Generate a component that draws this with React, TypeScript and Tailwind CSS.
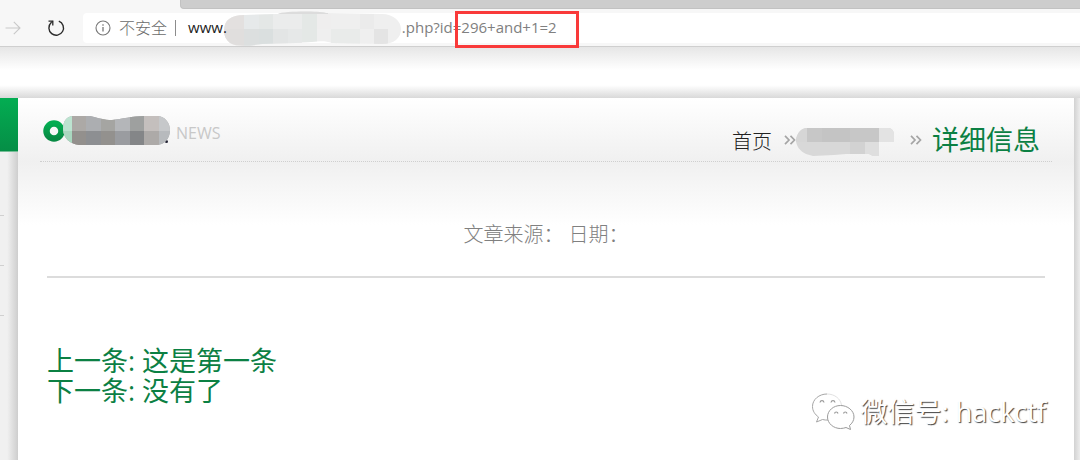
import React from 'react';

function ForwardIcon() {
  return (
    <svg width="16" height="16" viewBox="0 0 16 16" fill="none" stroke="#c9c9c9" strokeWidth="1.1" aria-hidden="true">
      <path d="M0.5 8H15M8.8 1.8L15 8L8.8 14.2" />
    </svg>
  );
}

function ReloadIcon() {
  return (
    <svg width="18" height="18" viewBox="0 0 18 18" fill="none" stroke="#2b2b2b" strokeWidth="1.4" aria-hidden="true">
      <path d="M11.8 2.1A7.3 7.3 0 1 1 4.2 3.6" />
      <path d="M1.500 2.2H5.800V6.500" strokeWidth="1.3" />
      <path d="M4.2 3.6L5.800 2.2" />
    </svg>
  );
}

function InfoIcon() {
  return (
    <svg width="16" height="16" viewBox="0 0 16 16" fill="none" stroke="#777" strokeWidth="1.1" aria-hidden="true">
      <circle cx="8" cy="8" r="7" />
      <path d="M8 7V11.5M8 4.3V5.7" strokeWidth="1.3" />
    </svg>
  );
}

function UrlMosaic() {
  return (
    <svg width="180" height="36" viewBox="0 0 180 36" aria-hidden="true">
      <clipPath id="url-blob">
        <path d="M2 21C2 10 9 5 22 5L56 4C62 1 96 1 104 3L160 4C171 4 179 11 179 19C179 28 172 34 160 34L110 33C100 29 88 33 74 33L40 34C28 36 14 37 8 33C4 30 2 26 2 21Z" />
      </clipPath>
      <g clipPath="url(#url-blob)">
        <rect width="180" height="36" fill="#efefef" />
        <path d="M56 0H106V4H56Z" fill="#dcdcdc" />
        <path d="M0 4H22V19H0Z" fill="#e3e0df" />
        <path d="M22 4H37V19H22Z" fill="#e6e9ea" />
        <path d="M37 4H51V19H37Z" fill="#e4e7e6" />
        <path d="M51 4H80V19H51Z" fill="#ebecec" />
        <path d="M80 4H95V32H80Z" fill="#e4e8e6" />
        <path d="M0 19H22V36H0Z" fill="#e0dedd" />
        <path d="M22 19H37V36H22Z" fill="#dcdfdf" />
        <path d="M37 19H51V36H37Z" fill="#dadfdf" />
        <path d="M51 19H66V36H51Z" fill="#e3e5e5" />
        <path d="M66 19H80V36H66Z" fill="#e6e8e8" />
        <path d="M95 4H109V19H95Z" fill="#efeeee" />
        <path d="M138 4H152V19H138Z" fill="#ebebeb" />
        <path d="M109 19H138V36H109Z" fill="#e9ebea" />
        <path d="M152 19H166V36H152Z" fill="#e4e4e4" />
      </g>
    </svg>
  );
}

function TitleMosaic() {
  return (
    <svg width="128" height="32" viewBox="0 0 128 32" aria-hidden="true">
      <defs>
        <linearGradient id="ring" x1="0" y1="0" x2="0" y2="1">
          <stop offset="0" stopColor="#04ad52" />
          <stop offset="1" stopColor="#078a43" />
        </linearGradient>
        <clipPath id="title-blob">
          <path d="M21 15C21 7 25 2 31 2H48C57 4 62 6 70 6C80 5 90 2 102 2H115C123 2 128 9 128 16C128 25 122 31 114 31H37C29 30 21 25 21 15Z" />
        </clipPath>
      </defs>
      <circle cx="12" cy="17" r="7.5" fill="none" stroke="url(#ring)" strokeWidth="6.5" />
      <circle cx="124.500" cy="27.500" r="1.500" fill="#223" />
      <g clipPath="url(#title-blob)">
        <rect width="128" height="32" fill="#aaa" />
        <path d="M20 0H30V17H20Z" fill="#bce3d0" />
        <path d="M20 17H30V32H20Z" fill="#a9d7bf" />
        <path d="M30 0H44V17H30Z" fill="#aca9a6" />
        <path d="M44 0H59V17H44Z" fill="#acaeb1" />
        <path d="M59 0H73V17H59Z" fill="#a5a5a2" />
        <path d="M73 0H88V17H73Z" fill="#b4b6b9" />
        <path d="M88 0H102V17H88Z" fill="#9ea09f" />
        <path d="M102 0H117V17H102Z" fill="#c4bfbd" />
        <path d="M117 0H128V17H117Z" fill="#c6c8ca" />
        <path d="M30 17H44V32H30Z" fill="#93908d" />
        <path d="M44 17H59V32H44Z" fill="#8d8f92" />
        <path d="M59 17H73V32H59Z" fill="#93918e" />
        <path d="M73 17H88V32H73Z" fill="#9a9ca0" />
        <path d="M88 17H102V32H88Z" fill="#848688" />
        <path d="M102 17H117V32H102Z" fill="#adaaa8" />
        <path d="M117 17H128V32H117Z" fill="#b7babd" />
      </g>
    </svg>
  );
}

function CrumbMosaic() {
  return (
    <svg width="98" height="28" viewBox="0 0 98 28" aria-hidden="true">
      <clipPath id="crumb-blob">
        <path d="M0 12C1 5 5 0 11 0H92C96 0 98 3 98 7V14H83V28H77L73 26H50L38 27L17 28L10 26C4 23 0 18 0 12Z" />
      </clipPath>
      <g clipPath="url(#crumb-blob)">
        <rect width="98" height="28" fill="#d8d8d8" />
        <path d="M0 0H11V14H0Z" fill="#d6d6d6" />
        <path d="M11 0H83V14H11Z" fill="#c7c7c7" />
        <path d="M26 0H54V14H26Z" fill="#c4c4c4" />
        <path d="M83 0H98V14H83Z" fill="#e3e3e3" />
        <path d="M54 14H69V28H54Z" fill="#d2d2d2" />
        <path d="M69 14H83V28H69Z" fill="#dedede" />
      </g>
    </svg>
  );
}

function Chevrons() {
  return (
    <svg width="12" height="10" viewBox="0 0 12 10" fill="none" stroke="#a5a5a5" strokeWidth="1.7" aria-hidden="true">
      <path d="M1 0.800L5 5L1 9.200M6.500 0.800L10.500 5L6.500 9.200" />
    </svg>
  );
}

function WechatIcon() {
  return (
    <svg width="44" height="38" viewBox="0 0 44 38" fill="#fff" strokeLinejoin="round" aria-hidden="true">
      <path d="M16 1C8 1 1.500 6.500 1.500 13.500C1.500 18 4 21.500 7.500 24L5.500 29L11.500 26.500C13.500 27 15 27.200 17 27" stroke="#a6a6a6" strokeWidth="1" />
      <path d="M16 1C24 1 29.500 6 30.500 12" fill="none" stroke="#dedede" strokeWidth="0.900" />
      <path d="M29.500 12.500C22.500 12.500 16.500 17.500 16.500 24C16.500 30.500 22.500 35.500 29.500 35.500C31.500 35.500 33.500 35 35 34.500L39.500 36.500L38.500 32.500C41 30.500 43 27.500 43 24C43 17.500 36.500 12.500 29.500 12.500Z" stroke="#9b9b9b" strokeWidth="1" />
      <path d="M9 9.500C9.500 7 12.500 7 13 9.500M20 9.500C20.500 7 23.500 7 24 9.500M23.500 20.500C24 18.500 26.500 18.500 27 20.500M32.500 20.500C33 18.500 35.500 18.500 36 20.500" fill="none" stroke="#9a9a9a" strokeWidth="1.200" />
    </svg>
  );
}

function BrowserBar() {
  return (
    <header className="border-b border-[#cfcfcf] bg-[#f7f7f7]">
      <div className="flex h-[9px] pl-[180px]">
        <div className="flex-1 rounded-bl-sm border-b border-l border-[#c2c2c2] bg-[#cdcdcd]" />
      </div>
      <div className="flex h-[37px] items-center pl-[5px]">
        <button type="button" aria-label="Forward"><ForwardIcon /></button>
        <button type="button" aria-label="Reload" className="ml-[26px]"><ReloadIcon /></button>
        <div className="ml-[18px] flex h-[30px] flex-1 items-center rounded-l-sm bg-white pl-3 text-[15px] text-[#808080]">
          <InfoIcon />
          <span className="ml-2 text-[16px] font-light text-[#6b6b6b]">不安全</span>
          <span className="ml-2 h-4 w-px bg-[#8c8c8c]" />
          <label htmlFor="address" className="relative -mr-[5px] ml-3 text-[#1c1c1c]">www.</label>
          <UrlMosaic />
          <div className="relative flex-1">
            <input
              id="address"
              type="text"
              defaultValue=".php?id=296+and+1=2"
              className="w-full bg-transparent outline-none"
            />
            <span className="pointer-events-none absolute -top-[5px] left-[53px] h-[37px] w-[124px] border-3 border-[#f93a3a]" />
          </div>
        </div>
      </div>
    </header>
  );
}

function SideStrip() {
  return (
    <aside className="w-[18px] shrink-0 bg-linear-to-r from-[#f0f0f0] from-40% to-[#cecece]">
      <div className="h-[54px] border-b border-[#75bd96] bg-linear-to-b from-[#03ad52] to-[#058e46]" />
      <div className="flex flex-col gap-[49px] pt-[63px]">
        <span className="w-1 border-t border-dashed border-[#d0d0d0]" />
        <span className="w-1 border-t border-dashed border-[#d0d0d0]" />
        <span className="w-1 border-t border-dashed border-[#d0d0d0]" />
      </div>
    </aside>
  );
}

export default function App() {
  return (
    <div className="flex min-h-screen flex-col bg-white font-['Open_Sans','Noto_Sans_CJK_SC',sans-serif]">
      <BrowserBar />
      <div className="h-[51px] bg-linear-to-b from-[#e6e6e6] via-white via-45% to-white">
        <div className="h-full bg-linear-to-b from-transparent from-75% to-[#d9d9d9]" />
      </div>
      <div className="flex flex-1">
        <SideStrip />
        <main className="relative min-w-0 flex-1 bg-white">
          <div className="h-[127px] bg-linear-to-b from-white via-[#f0f0f0] to-white px-[22px]">
            <div className="flex h-16 items-start justify-between border-b border-dotted border-[#cfcfcf] pr-3 pl-[2px]">
              <h1 className="flex items-center pt-4 text-[16px] text-[#c8c8c8]">
                <TitleMosaic />
                <span className="mt-[6px] ml-[6px]">NEWS</span>
              </h1>
              <nav className="flex h-full items-center pt-5">
                <a href="#home" className="mt-1 text-[20px] font-light text-[#222]">首页</a>
                <span className="ml-3"><Chevrons /></span>
                <a href="#section" aria-label="Section" className="mt-1"><CrumbMosaic /></a>
                <span className="ml-4"><Chevrons /></span>
                <a href="#detail" className="ml-[10px] text-[27px] leading-8 text-[#0b8043]">详细信息</a>
              </nav>
            </div>
          </div>
          <article className="px-[29px]">
            <p className="h-[53px] border-b-2 border-[#dcdcdc] text-center text-[20px] leading-5 font-light text-[#808080]">
              文章来源： 日期：
            </p>
            <div className="pt-[68px] text-[27px] leading-[30px] text-[#0b8043]">
              <a href="#previous" className="block">上一条: 这是第一条</a>
              <a href="#next" className="block">下一条: 没有了</a>
            </div>
          </article>
          <div className="absolute right-[28px] bottom-[29px] flex items-center gap-[6px] text-[27px] text-white [text-shadow:1px_1px_1px_#444]">
            <WechatIcon />
            <span className="leading-9">微信号: hackctf</span>
          </div>
        </main>
        <div className="w-[6px] shrink-0 bg-linear-to-r from-[#d2d2d2] to-[#ececec]" />
      </div>
    </div>
  );
}
